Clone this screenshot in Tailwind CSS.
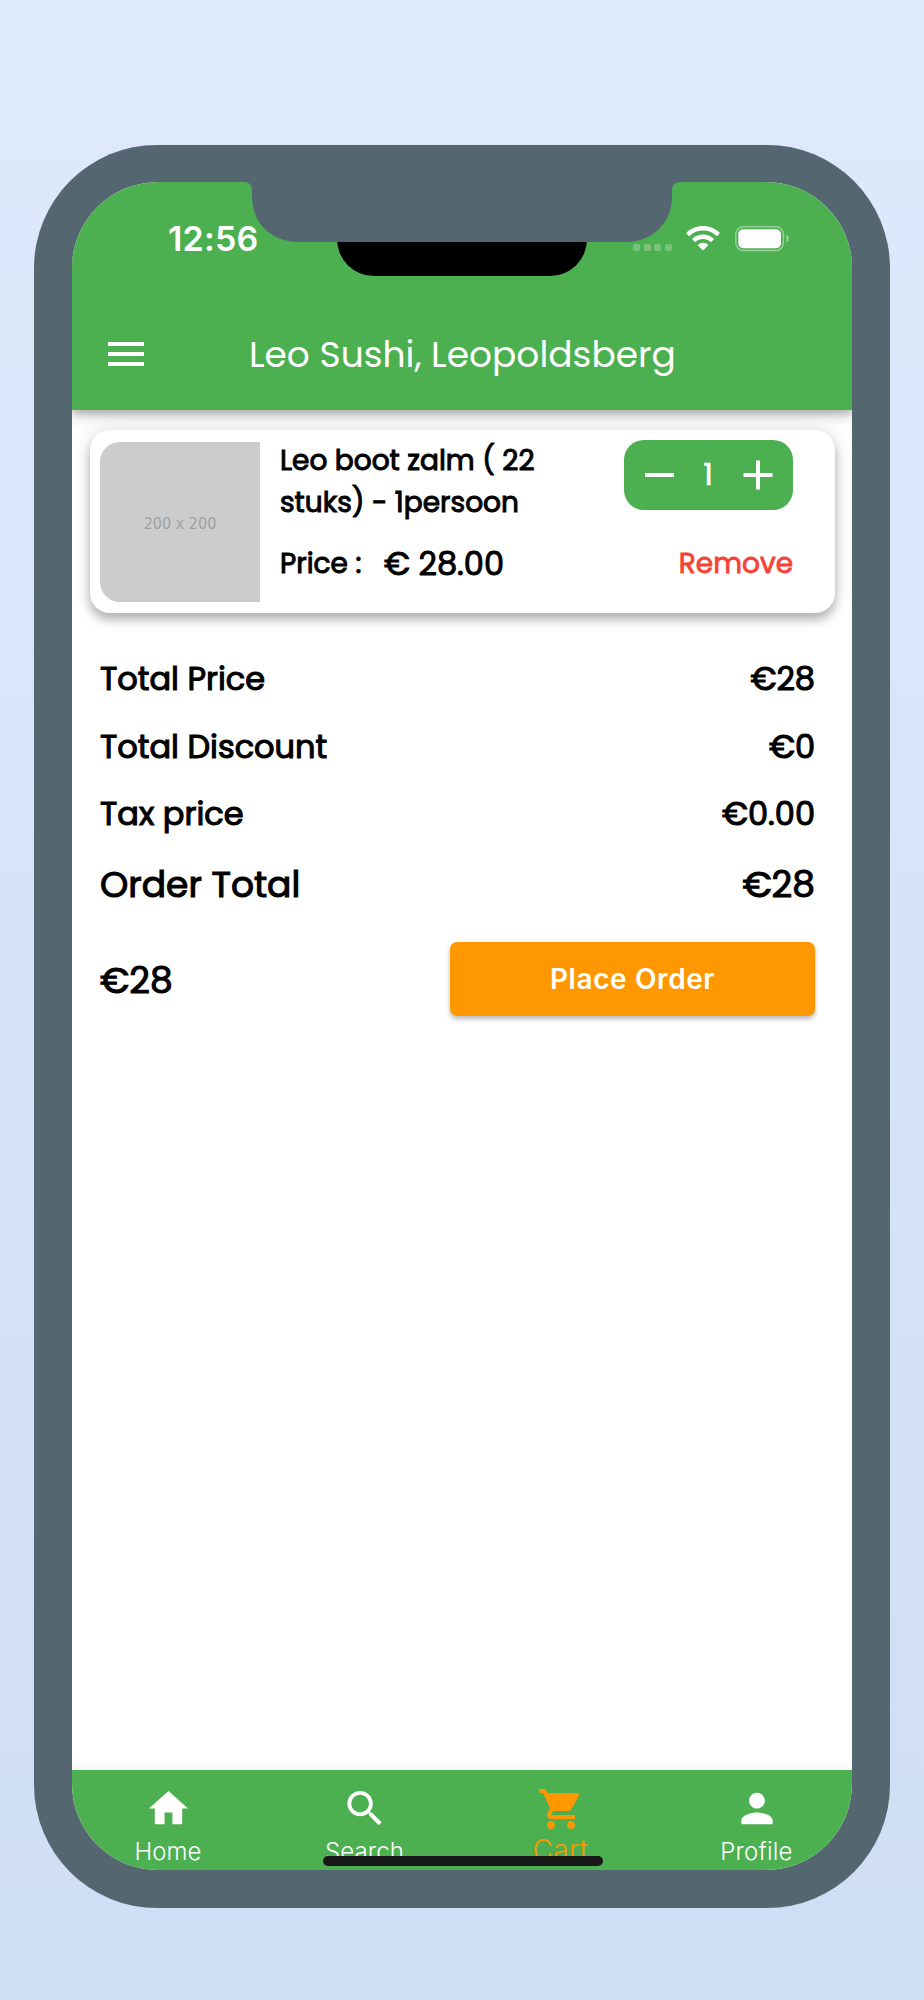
<!DOCTYPE html>
<html lang="en">
<head>
<meta charset="utf-8">
<title>Cart</title>
<script src="https://cdn.jsdelivr.net/npm/@tailwindcss/browser@4"></script>
</head>
<body class="w-[924px] h-[2000px] overflow-hidden bg-linear-to-b from-[#dfe9fc] to-[#cedef4] pt-[145px] pl-[34px] font-['Poppins','Inter',sans-serif]">
<div class="w-[856px] h-[1763px] rounded-[123px] bg-[#546771] pt-[37px] pl-[38px]">
  <div class="w-[780px] h-[1688px] rounded-[86px] overflow-hidden bg-white flex flex-col">
    <header class="relative z-10 h-[228px] shrink-0 bg-[#4caf50] text-white shadow-[0_4px_8px_rgba(0,0,0,0.25),0_5px_18px_rgba(0,0,0,0.14)]">
      <div class="h-[114px] pt-[36px] pl-[96px] pr-[62px] flex items-start justify-between">
        <span class="text-[34px] leading-[42px] font-semibold font-['Inter',sans-serif] tracking-[0.2px]">12:56</span>
        <div class="flex pt-[8px]">
          <div class="flex gap-[3.6px] pt-[18px] mr-[14px]">
            <i class="w-[7px] h-[7px] rounded-[2px] bg-white/25"></i><i class="w-[7px] h-[7px] rounded-[2px] bg-white/25"></i><i class="w-[7px] h-[7px] rounded-[2px] bg-white/25"></i><i class="w-[7px] h-[7px] rounded-[2px] bg-white/25"></i>
          </div>
          <svg class="w-[34px] h-[25px] mr-[15px]" viewBox="0 0 34 25" fill="white"><path d="M17 0C10.500 0 4.700 2.500.6 6.500c-.4.400-.4.800 0 1.200l2 2c.4.400.8.400 1.200 0C7.200 6.400 11.900 4.600 17 4.600s9.800 1.800 13.200 5.100c.4.400.8.400 1.200 0l2-2c.4-.4.400-.8 0-1.200C29.300 2.500 23.500 0 17 0Z"/><path d="M17 8.400c-4.100 0-7.800 1.500-10.500 4.100-.4.400-.4.800 0 1.200l2 2c.4.400.8.400 1.200 0C11.600 14 14.200 13 17 13s5.400 1 7.300 2.700c.4.400.8.400 1.200 0l2-2c.4-.4.400-.8 0-1.200-2.700-2.600-6.400-4.100-10.500-4.100Z"/><path d="M17 16.700c-1.900 0-3.500.7-4.700 1.800-.4.400-.4.800 0 1.200l4.200 4.300c.4.400.7.400 1.100 0l4.200-4.300c.4-.4.400-.8 0-1.200-1.300-1.100-2.900-1.800-4.800-1.800Z"/></svg>
          <svg class="w-[55px] h-[26px]" viewBox="0 0 55 26"><rect x=".8" y=".8" width="47.600" height="23.800" rx="7.500" fill="none" stroke="white" stroke-opacity=".42" stroke-width="1.500"/><rect x="3.300" y="3.200" width="42.700" height="19" rx="5" fill="white"/><path d="M51.500 8.500c3 1.300 3 7 0 8.300Z" fill="white" fill-opacity=".45"/></svg>
        </div>
      </div>
      <div class="h-[114px] flex items-center pl-[30px] pt-[2px]">
        <svg class="w-[48px] h-[48px]" viewBox="0 0 24 24" fill="white"><path d="M3 18h18v-2H3v2zm0-5h18v-2H3v2zm0-7v2h18V6H3z"/></svg>
        <h1 class="ml-[99px] pt-[1px] text-[36px] leading-[48px] font-normal whitespace-nowrap">Leo Sushi, Leopoldsberg</h1>
      </div>
      <div class="absolute left-[265px] top-[40px] w-[250px] h-[54px] rounded-b-[37px] bg-black"></div>
      <svg class="absolute left-[172px] top-0 w-[436px] h-[60px]" viewBox="0 0 436 60"><path d="M0 0C5 0 8 3 8 9V14C8 42 28 60 55 60H381C408 60 428 42 428 14V9C428 3 431 0 436 0Z" fill="#546771"/></svg>
    </header>

    <main class="flex-1 text-black">
      <section class="mt-[20px] ml-[18px] w-[745px] h-[183px] rounded-[20px] bg-white pt-[10px] pl-[10px] flex shadow-[0_7px_10px_rgba(0,0,0,0.22),0_2px_18px_rgba(0,0,0,0.16)]">
        <div class="mt-[2px] w-[160px] h-[160px] pt-[3px] rounded-l-[20px] bg-[#ccc] text-[#a0a0a0] text-[16px] font-['DejaVu_Sans_Condensed','Noto_Sans',sans-serif] flex items-center justify-center">200 x 200</div>
        <div class="ml-[20px] w-[344px] whitespace-nowrap [-webkit-text-stroke:1px_#000]">
          <p class="text-[28px] leading-[42px]">Leo boot zalm ( 22<br>stuks) - 1persoon</p>
          <p class="mt-[18px] flex items-center h-[44px]"><span class="text-[28px] w-[104px]">Price :</span><span class="text-[32px]">€ 28.00</span></p>
        </div>
        <div class="w-[169px]">
          <div class="h-[70px] rounded-[20px] bg-[#4caf50] text-white flex items-center pl-[14px]">
            <svg class="w-[42px] h-[42px]" viewBox="0 0 42 42" fill="white"><path d="M7 19h29v4H7z"/></svg>
            <span class="w-[56px] pb-[2px] text-center text-[30px] [-webkit-text-stroke:0.6px_#fff]">1</span>
            <svg class="w-[42px] h-[42px]" viewBox="0 0 42 42" fill="white"><path d="M7.500 19h12.500V6.500h4V19h12.500v4H24v12.500h-4V23H7.500z"/></svg>
          </div>
          <div class="mt-[32px] h-[44px] leading-[44px] text-right text-[28px] text-[#f44336] [-webkit-text-stroke:0.8px_#f44336]">Remove</div>
        </div>
      </section>

      <section class="mt-[31px] ml-[28px] w-[715px] text-[32px] [-webkit-text-stroke:1.1px_#000]">
        <div class="h-[69px] flex items-center justify-between"><span>Total Price</span><span>€28</span></div>
        <div class="h-[67px] flex items-center justify-between"><span>Total Discount</span><span>€0</span></div>
        <div class="h-[68px] flex items-center justify-between"><span>Tax price</span><span>€0.00</span></div>
        <div class="h-[74px] flex items-center justify-between text-[36px]"><span>Order Total</span><span>€28</span></div>
        <div class="mt-[20px] h-[74px] flex items-center justify-between text-[36px]"><span class="pt-[3px]">€28</span>
          <button class="w-[365px] h-[74px] rounded-[7px] bg-[#ff9800] text-white text-[28px] font-semibold font-['Inter',sans-serif] tracking-[0.6px] [-webkit-text-stroke:0] shadow-[0_3px_5px_rgba(0,0,0,0.28)]">Place Order</button>
        </div>
      </section>
    </main>

    <nav class="relative h-[100px] shrink-0 bg-[#4caf50] text-white grid grid-cols-4 font-['Inter',sans-serif] shadow-[0_-2px_8px_rgba(0,0,0,0.06)]">
      <div class="flex flex-col items-center pt-[15px] pr-[3px]"><svg class="w-[47px] h-[47px]" viewBox="0 0 24 24" fill="white"><path d="M10 20v-6h4v6h5v-8h3L12 3 2 12h3v8z"/></svg><span class="mt-[5px] text-[24px] leading-[30px] font-light">Home</span></div>
      <div class="flex flex-col items-center pt-[15px]"><svg class="w-[48px] h-[47px]" viewBox="0 0 24 24" fill="white"><path d="M15.500 14h-.79l-.28-.27C15.410 12.590 16 11.110 16 9.500 16 5.910 13.090 3 9.500 3S3 5.910 3 9.500 5.910 16 9.500 16c1.610 0 3.090-.59 4.230-1.570l.27.28v.79l5 4.990L20.490 19l-4.990-5zm-6 0C7.010 14 5 11.990 5 9.500S7.010 5 9.500 5 14 7.010 14 9.500 11.990 14 9.500 14z"/></svg><span class="mt-[5px] text-[24px] leading-[30px] font-light tracking-[0.1px]">Search</span></div>
      <div class="flex flex-col items-center pt-[15px] pl-[2px] text-[#ff9800]"><svg class="w-[48px] h-[48px]" viewBox="0 0 24 24" fill="#ff9800"><path d="M7 18c-1.100 0-1.990.9-1.990 2S5.900 22 7 22s2-.9 2-2-.9-2-2-2zM1 2v2h2l3.600 7.590-1.350 2.450c-.16.280-.25.610-.25.960 0 1.100.9 2 2 2h12v-2H7.420c-.14 0-.25-.11-.25-.25l.03-.12.900-1.630h7.450c.75 0 1.410-.41 1.750-1.030l3.580-6.490c.08-.14.120-.31.120-.48 0-.55-.45-1-1-1H5.210l-.94-2H1zm16 16c-1.100 0-1.990.9-1.990 2s.89 2 1.990 2 2-.9 2-2-.9-2-2-2z"/></svg><span class="text-[28px] leading-[34px] font-light tracking-[0.4px]">Cart</span></div>
      <div class="flex flex-col items-center pt-[15px] pl-[4px]"><svg class="w-[48px] h-[47px]" viewBox="0 0 24 24" fill="white"><path d="M12 12c2.210 0 4-1.790 4-4s-1.790-4-4-4-4 1.790-4 4 1.790 4 4 4zm0 2c-2.670 0-8 1.340-8 4v2h16v-2c0-2.660-5.330-4-8-4z"/></svg><span class="mt-[5px] text-[24px] leading-[30px] font-light tracking-[0.2px]">Profile</span></div>
      <div class="absolute left-[251px] top-[86px] w-[280px] h-[10px] rounded-full bg-[#171717]"></div>
    </nav>
  </div>
</div>
</body>
</html>
